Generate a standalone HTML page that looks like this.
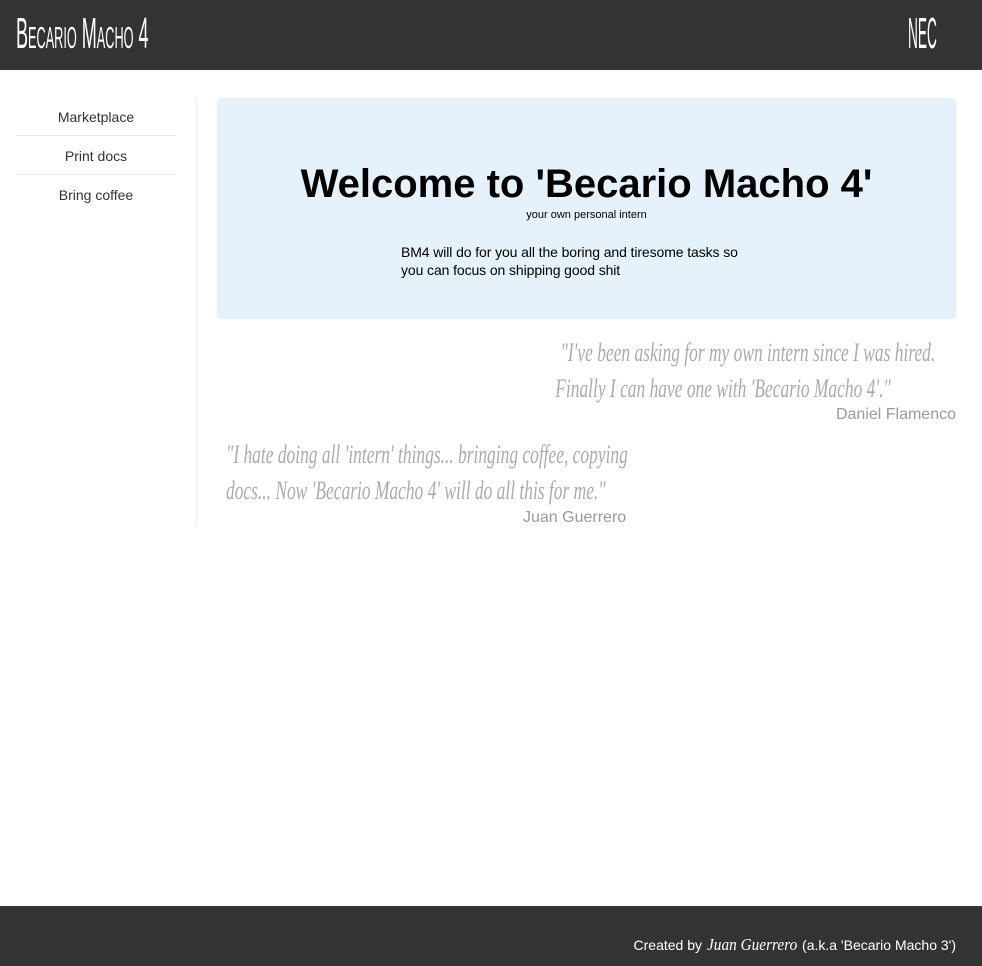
<!DOCTYPE html>
<html><head><meta charset="utf-8"><style>
body{margin:0;width:982px;height:966px;position:relative;background:#fff;font-family:"Liberation Sans",sans-serif;overflow:hidden}
.hdr{position:absolute;left:0;top:0;width:982px;height:70px;background:#333}
.logo{position:absolute;color:#fff;font-size:44px;line-height:44px;white-space:nowrap;transform-origin:0 0;font-variant:small-caps}
.side{position:absolute;left:16px;top:97px;width:160px}
.side div{height:38px;line-height:40px;text-align:center;font-size:14px;color:#333;border-bottom:1px solid #e5e5e5}
.side div:last-child{border:none}
.vline{position:absolute;left:196px;top:97px;width:1px;height:430px;background:#eee}
.jumbo{position:absolute;left:217px;top:98px;width:739px;height:221px;background:#e5f2fb;border-radius:4px}
h1{position:absolute;left:0;width:739px;top:63px;margin:0;text-align:center;font-size:40px;line-height:46px;color:#000}
.sub{position:absolute;left:0;width:739px;top:111px;text-align:center;font-size:11px;color:#000}
.desc{position:absolute;left:184px;top:145px;width:360px;font-size:14px;line-height:18px;color:#000;letter-spacing:-0.1px}
.q{position:absolute;font-family:"Liberation Serif",serif;font-style:italic;color:#aaa;font-size:26px;line-height:36px;white-space:nowrap}
.q span{display:inline-block;transform:scaleX(.67)}
.a{position:absolute;font-size:16px;color:#999}
.ftr{position:absolute;left:0;top:906px;width:982px;height:60px;background:#333;color:#fff;font-size:14px}
</style></head><body>
<div class="hdr">
<div class="logo" style="left:16px;top:12px;transform:scaleX(.41)">Becario Macho 4</div>
<div class="logo" style="left:908px;top:12px;transform:scaleX(.31)">NEC</div>
</div>
<div class="side"><div>Marketplace</div><div>Print docs</div><div>Bring coffee</div></div>
<div class="vline"></div>
<div class="jumbo">
<h1>Welcome to 'Becario Macho 4'</h1>
<div class="sub">your own personal intern</div>
<div class="desc">BM4 will do for you all the boring and tiresome tasks so you can focus on shipping good shit</div>
</div>
<div class="q" style="right:47px;top:335px"><span style="transform-origin:100% 50%">"I've been asking for my own intern since I was hired.</span></div>
<div class="q" style="right:91px;top:371px"><span style="transform-origin:100% 50%">Finally I can have one with 'Becario Macho 4'."</span></div>
<div class="a" style="right:26px;top:406px">Daniel Flamenco</div>
<div class="q" style="left:226px;top:437px"><span style="transform-origin:0 50%">"I hate doing all 'intern' things... bringing coffee, copying</span></div>
<div class="q" style="left:226px;top:473px"><span style="transform-origin:0 50%">docs... Now 'Becario Macho 4' will do all this for me."</span></div>
<div class="a" style="left:523px;top:509px">Juan Guerrero</div>
<div class="ftr"><div style="position:absolute;right:26px;top:29px">Created by <i style="font-family:'Liberation Serif',serif;font-size:17px;display:inline-block;transform:scaleX(.9);margin:0 -4px">Juan Guerrero</i> (a.k.a 'Becario Macho 3')</div></div>
</body></html>
